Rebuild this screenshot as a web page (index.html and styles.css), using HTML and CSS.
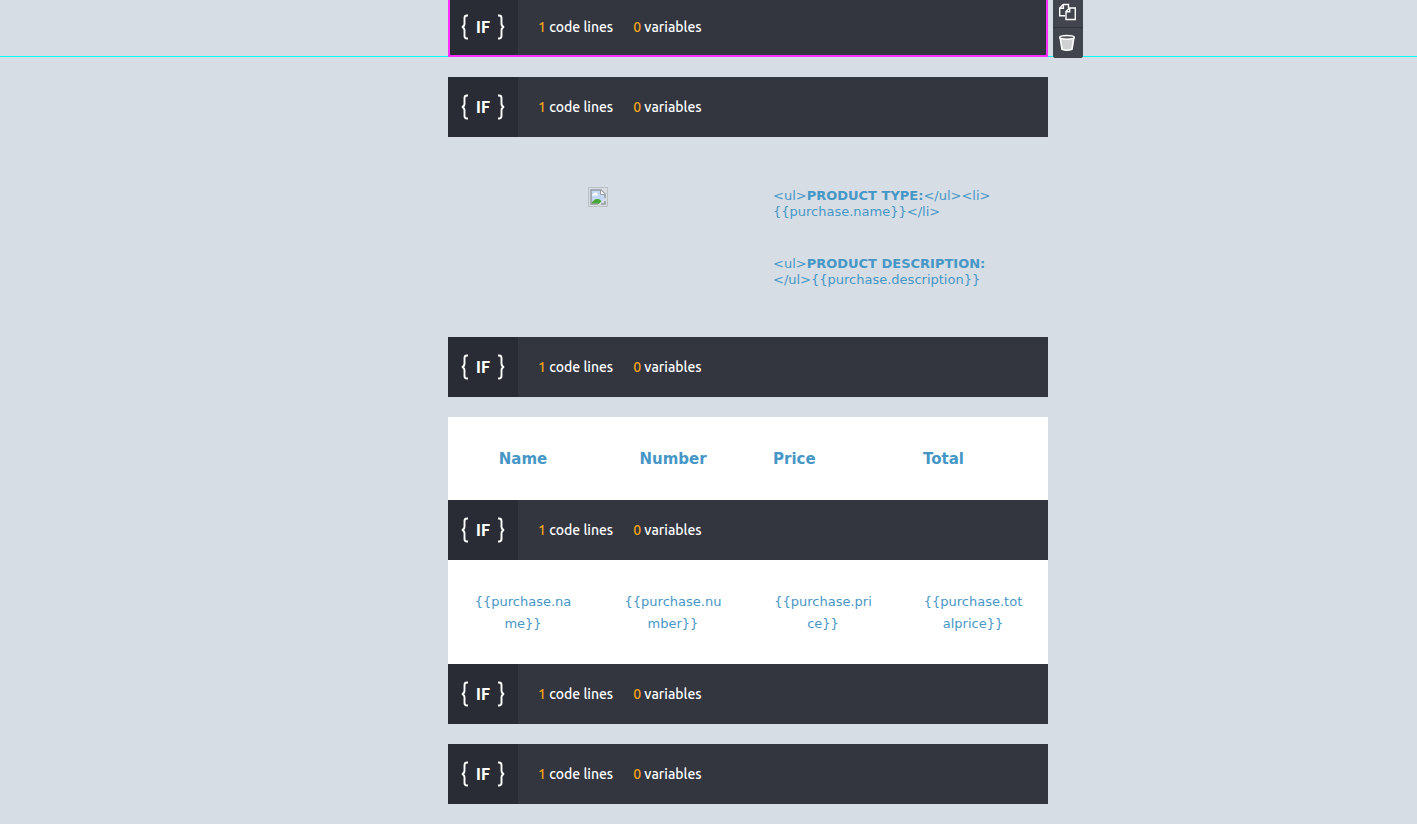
FILE: index.html
```html
<!DOCTYPE html>
<html lang="en">
<head>
<meta charset="utf-8">
<meta name="viewport" content="width=device-width, initial-scale=1">
<title>Email editor</title>
<link rel="stylesheet" href="styles.css">
</head>
<body>
<svg class="defs" aria-hidden="true">
  <symbol id="braces" viewBox="0 0 44 26">
    <path d="M7 1.500H6C4.300 1.500 3.500 2.300 3.500 4V9.500C3.500 11.500 2.800 12.600 1 13C2.800 13.400 3.500 14.500 3.500 16.500V22C3.500 23.700 4.300 24.500 6 24.500H7M37 1.500H38C39.700 1.500 40.500 2.300 40.500 4V9.500C40.500 11.500 41.200 12.600 43 13C41.200 13.400 40.500 14.500 40.500 16.500V22C40.500 23.700 39.700 24.500 38 24.500H37" fill="none" stroke="#fff" stroke-width="1.900"/>
  </symbol>
</svg>
<div class="guide"></div>
<main class="canvas">
  <section class="code-block selected">
    <div class="badge"><svg class="braces"><use href="#braces"/></svg><span>IF</span></div>
    <p class="stats"><span><b>1</b> code lines</span><span><b>0</b> variables</span></p>
    <div class="tools">
      <button type="button" class="tool" aria-label="Duplicate">
        <svg width="18" height="18" viewBox="0 0 18 18" fill="none" stroke="#fff" stroke-width="1.400"><path d="M7 12.800H1.700V5L5.200 1.500H10.500V5M5.400 1.500V5.200H1.700"/><path d="M8 16.500V8.500L11.500 5H17.300V16.500ZM11.700 5V8.700H8"/></svg>
      </button>
      <button type="button" class="tool" aria-label="Delete">
        <svg width="18" height="18" viewBox="0 0 18 18"><path d="M2.200 4L4 15.200Q9 17.300 14 15.200L15.800 4Z" fill="#d0d1d3" stroke="#fff" stroke-width="1.600"/><ellipse cx="9" cy="3.300" rx="7.300" ry="1.900" fill="#55565d" stroke="#fff" stroke-width="1.500"/></svg>
      </button>
    </div>
  </section>

  <section class="code-block spaced">
    <div class="badge"><svg class="braces"><use href="#braces"/></svg><span>IF</span></div>
    <p class="stats"><span><b>1</b> code lines</span><span><b>0</b> variables</span></p>
  </section>

  <section class="product">
    <div class="picture">
      <svg role="img" aria-label="Missing picture" width="20" height="20" viewBox="0 0 20 20">
        <path d="M.5 .5H19.500V19.500H.5Z" fill="none" stroke="#bdbebf"/>
        <path d="M2.500 2.500H13L17.500 7V17.500H2.500Z" fill="#c3d8f6"/>
        <path d="M4 8.500C4 6.500 6 6.800 6.500 6C7.500 4.500 9 5.500 9 7C10 7 10 8.500 9 8.500Z" fill="#fff"/>
        <path d="M3 17C4 14 7 12 9.500 12C12 12 13 14 13.500 14.500L11 17Z" fill="#48a634"/>
        <path d="M9.500 18L18 10.500V13L13 18Z" fill="#d6dde5"/>
        <path d="M10 17H3V3H13L17 7V11M13 17H17V14" fill="none" stroke="#999b9d" stroke-width="1.500"/>
        <path d="M12.500 3V7.500H17" fill="#f5f6f7" stroke="#999b9d"/>
      </svg>
    </div>
    <div class="details">
      <p>&lt;ul&gt;<strong>PRODUCT TYPE:</strong>&lt;/ul&gt;&lt;li&gt;<wbr>{{purchase.name}}&lt;/li&gt;</p>
      <p>&lt;ul&gt;<strong>PRODUCT DESCRIPTION:</strong><wbr>&lt;/ul&gt;{{purchase.description}}</p>
    </div>
  </section>

  <section class="code-block">
    <div class="badge"><svg class="braces"><use href="#braces"/></svg><span>IF</span></div>
    <p class="stats"><span><b>1</b> code lines</span><span><b>0</b> variables</span></p>
  </section>

  <table class="sheet spaced">
    <thead>
      <tr><th scope="col">Name</th><th scope="col">Number</th><th scope="col" class="start">Price</th><th scope="col" class="start">Total</th></tr>
    </thead>
  </table>

  <section class="code-block">
    <div class="badge"><svg class="braces"><use href="#braces"/></svg><span>IF</span></div>
    <p class="stats"><span><b>1</b> code lines</span><span><b>0</b> variables</span></p>
  </section>

  <table class="sheet">
    <tbody>
      <tr><td>{{purchase.name}}</td><td>{{purchase.number}}</td><td>{{purchase.price}}</td><td>{{purchase.totalprice}}</td></tr>
    </tbody>
  </table>

  <section class="code-block">
    <div class="badge"><svg class="braces"><use href="#braces"/></svg><span>IF</span></div>
    <p class="stats"><span><b>1</b> code lines</span><span><b>0</b> variables</span></p>
  </section>

  <section class="code-block spaced">
    <div class="badge"><svg class="braces"><use href="#braces"/></svg><span>IF</span></div>
    <p class="stats"><span><b>1</b> code lines</span><span><b>0</b> variables</span></p>
  </section>
</main>
</body>
</html>
```
FILE: styles.css
```css
* { box-sizing: border-box; }

body {
  margin: 0;
  padding-left: 79px;
  background: #d6dde5;
  color: #4697c6;
  font: 13px/16px Verdana, "DejaVu Sans", sans-serif;
}

p { margin: 0; }

.defs { position: absolute; width: 0; height: 0; }

.canvas {
  display: flow-root;
  max-width: 600px;
  margin: -3px auto 20px;
}

.spaced { margin-top: 20px; }

/* Drop guide that crosses the page under the selected block */
.guide {
  position: absolute;
  top: 56px;
  left: 0;
  right: 0;
  height: 1px;
  background: #0ff;
}

/* Dark strip standing for a piece of template code */
.code-block {
  display: flex;
  min-height: 60px;
  background: #33363f;
  color: #fff;
  font: 500 14px/20px Ubuntu, "Noto Sans", sans-serif;
}

.badge {
  display: grid;
  place-items: center;
  width: 70px;
  background: #292c34;
  font: 900 16px/20px Lato, sans-serif;
}

.badge > * { grid-area: 1 / 1; }

.braces { width: 44px; height: 26px; }

.stats {
  display: flex;
  align-items: center;
  gap: 20px;
  padding: 0 20px;
}

.stats b { color: #f5a318; font-weight: inherit; }

.selected { position: relative; }

.selected::after {
  content: "";
  position: absolute;
  inset: 0;
  border: 2px solid #ff2fff;
  pointer-events: none;
}

.tools {
  position: absolute;
  bottom: -1px;
  left: calc(100% + 5px);
  display: grid;
  gap: 1px;
  background: #35373f;
  border-radius: 3px;
  overflow: hidden;
}

.tool {
  display: grid;
  place-items: center;
  width: 30px;
  height: 30px;
  padding: 0 2px 0 0;
  border: 0;
  background: #43454e;
}

.product {
  display: grid;
  grid-template-columns: 1fr 1fr;
  padding: 50px 0 49px;
}

.picture svg { display: block; margin: 0 auto; }

.details {
  display: grid;
  gap: 36px;
  padding: 1px 25px 0;
}

.sheet {
  width: 100%;
  table-layout: fixed;
  border-collapse: collapse;
  background: #fff;
}

.sheet th,
.sheet td {
  padding: 31px 25px 29px;
  text-align: center;
  line-height: 22px;
  word-break: break-all;
}

.sheet th { font-size: 15px; line-height: 23px; }
.sheet .start { text-align: left; }
```
